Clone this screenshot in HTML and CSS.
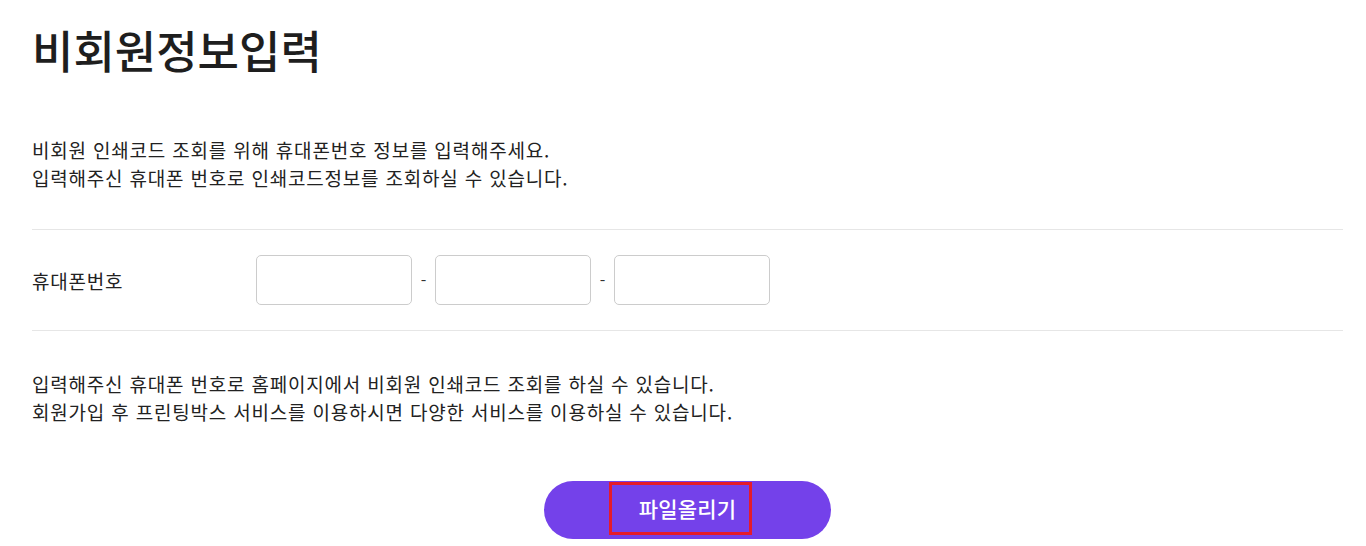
FILE: index.html
```html
<!DOCTYPE html>
<html lang="ko">
<head>
<meta charset="utf-8">
<title>비회원정보입력</title>
<link rel="stylesheet" href="styles.css">
</head>
<body>
<div class="page">
  <h1 class="title">비회원정보입력</h1>
  <p class="intro">비회원 인쇄코드 조회를 위해 휴대폰번호 정보를 입력해주세요.<br>입력해주신 휴대폰 번호로 인쇄코드정보를 조회하실 수 있습니다.</p>
  <div class="phone-row">
    <label class="phone-label">휴대폰번호</label>
    <div class="phone-fields">
      <input class="phone-input" type="text">
      <span class="dash">-</span>
      <input class="phone-input" type="text">
      <span class="dash">-</span>
      <input class="phone-input" type="text">
    </div>
  </div>
  <p class="notice">입력해주신 휴대폰 번호로 홈페이지에서 비회원 인쇄코드 조회를 하실 수 있습니다.<br>회원가입 후 프린팅박스 서비스를 이용하시면 다양한 서비스를 이용하실 수 있습니다.</p>
  <div class="actions">
    <button class="upload-btn" type="button"><span class="highlight"></span>파일올리기</button>
  </div>
</div>
</body>
</html>
```

FILE: styles.css
```css
* { box-sizing: border-box; }
html, body { margin: 0; padding: 0; background: #fff; }
body {
  font-family: "Noto Sans CJK KR", "Noto Sans", sans-serif;
  color: #222;
}
.page {
  padding: 0 23px 0 32px;
}
.title {
  margin: 20px 0 0;
  font-size: 45px;
  line-height: 60px;
  font-weight: 500;
  color: #1e1e1e;
  letter-spacing: 0;
}
.intro {
  margin: 56px 0 0;
  font-size: 19px;
  line-height: 28px;
  letter-spacing: 0.8px;
}
.phone-row {
  margin-top: 37px;
  border-top: 1px solid #e6e6e6;
  border-bottom: 1px solid #e6e6e6;
  display: flex;
  align-items: center;
  padding: 25px 0;
}
.phone-label {
  width: 224px;
  font-size: 19px;
  letter-spacing: 0.8px;
}
.phone-fields {
  display: flex;
  align-items: center;
}
.phone-input {
  width: 156px;
  height: 50px;
  border: 1px solid #cccccc;
  border-radius: 5px;
  margin: 0;
  padding: 0 10px;
  font-size: 16px;
  background: #fff;
}
.dash {
  width: 23px;
  text-align: center;
  font-size: 16px;
  color: #333;
}
.notice {
  margin: 39px 0 0;
  font-size: 19px;
  line-height: 28px;
  letter-spacing: 0.8px;
}
.actions {
  display: flex;
  justify-content: center;
  margin-top: 55px;
}
.upload-btn {
  position: relative;
  width: 287px;
  height: 58px;
  border: none;
  border-radius: 29px;
  background: #7441ea;
  color: #fff;
  font-family: "Noto Sans CJK KR", "Noto Sans", sans-serif;
  font-size: 21px;
  font-weight: 500;
  padding: 0 0 4px;
  letter-spacing: 0.2px;
}
.highlight {
  position: absolute;
  left: 65px;
  top: 1px;
  width: 143px;
  height: 53px;
  border: 3px solid #e51b2b;
}
```
